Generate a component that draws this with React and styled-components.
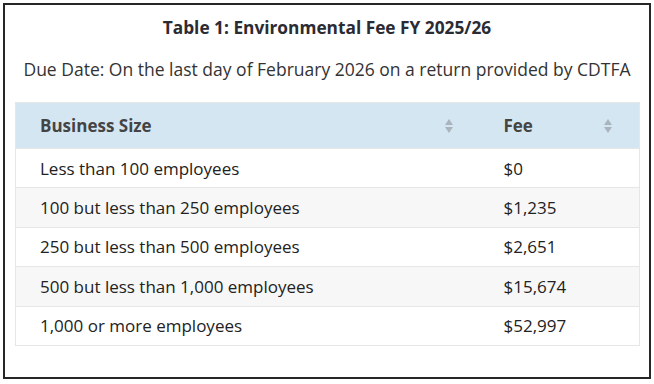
import React from "react";
import styled, { createGlobalStyle } from "styled-components";

const GlobalStyle = createGlobalStyle`
  html, body {
    margin: 0;
    padding: 0;
    background: #ffffff;
  }
  body {
    font-family: "Open Sans", "Liberation Sans", sans-serif;
    color: #222;
  }
`;

const rows = [
  { size: "Less than 100 employees", fee: "$0" },
  { size: "100 but less than 250 employees", fee: "$1,235" },
  { size: "250 but less than 500 employees", fee: "$2,651" },
  { size: "500 but less than 1,000 employees", fee: "$15,674" },
  { size: "1,000 or more employees", fee: "$52,997" },
];

const SortIcon = () => (
  <svg width="10" height="16" viewBox="0 0 10 16">
    <path d="M5 1 L9 7 L1 7 Z" fill="#a9b4bd" />
    <path d="M5 15 L9 9 L1 9 Z" fill="#a9b4bd" />
  </svg>
);

const App = () => {
  return (
    <>
      <GlobalStyle />
      <Frame>
        <Title>Table 1: Environmental Fee FY 2025/26</Title>
        <DueDate>
          Due Date: On the last day of February 2026 on a return provided by
          CDTFA
        </DueDate>
        <Table>
          <thead>
            <tr>
              <HeadCell width="464px">
                <HeadInner>
                  <span>Business Size</span>
                  <SortIcon />
                </HeadInner>
              </HeadCell>
              <HeadCell>
                <HeadInner>
                  <span>Fee</span>
                  <SortIcon />
                </HeadInner>
              </HeadCell>
            </tr>
          </thead>
          <tbody>
            {rows.map((row, index) => (
              <Row key={index} $striped={index % 2 === 1}>
                <Cell>{row.size}</Cell>
                <Cell>{row.fee}</Cell>
              </Row>
            ))}
          </tbody>
        </Table>
      </Frame>
    </>
  );
};

export default App;

const Frame = styled.div`
  box-sizing: border-box;
  margin: 3px 0 0 3px;
  width: 648px;
  height: 376px;
  border: 2px solid #262626;
  padding: 0 10px;
`;

const Title = styled.div`
  text-align: center;
  font-weight: 700;
  font-size: 17.3px;
  color: #2b2b33;
  padding-top: 13px;
  line-height: 20px;
`;

const DueDate = styled.div`
  text-align: center;
  font-size: 17.5px;
  color: #333;
  padding-top: 21px;
  line-height: 20px;
  white-space: nowrap;
`;

const Table = styled.table`
  margin-top: 23px;
  width: 625px;
  border-collapse: collapse;
  border: 1px solid #e6e6e6;
`;

const HeadCell = styled.th`
  width: ${(p) => p.width || "auto"};
  box-sizing: border-box;
  height: 46px;
  background: #d5e6f3;
  padding: 0 24px;
  text-align: left;
  font-weight: 700;
  font-size: 17px;
  color: #444;
`;

const HeadInner = styled.div`
  display: flex;
  align-items: center;
  justify-content: space-between;
  padding-right: 2px;
`;

const Row = styled.tr`
  background: ${(p) => (p.$striped ? "#f7f7f7" : "#ffffff")};
  border-top: 1px solid #e6e6e6;
`;

const Cell = styled.td`
  height: 38.4px;
  padding: 0 24px;
  font-size: 17px;
  color: #222;
`;
